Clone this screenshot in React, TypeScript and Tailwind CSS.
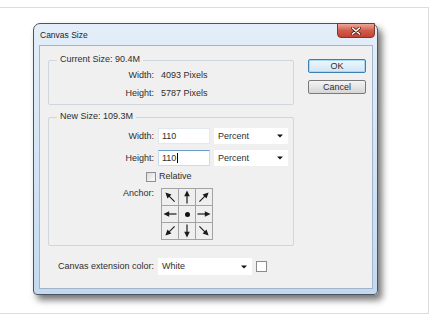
import React from "react";

const font = { fontFamily: '"Liberation Sans", Arial, sans-serif' };

function Arrow({ rot }: { rot: number }) {
  return (
    <svg width="16" height="16" viewBox="0 0 16 16">
      <g transform={`rotate(${rot} 8 8)`}>
        <line x1="8" y1="14.5" x2="8" y2="6" stroke="#1a1a1a" strokeWidth="1.2" />
        <polygon points="8,1.5 5.2,7.2 10.8,7.2" fill="#1a1a1a" />
      </g>
    </svg>
  );
}

function Caret() {
  return (
    <svg width="6" height="4" viewBox="0 0 6 4">
      <polygon points="0,0.5 6,0.5 3,3.5" fill="#111" />
    </svg>
  );
}

function Cell({ children }: { children?: React.ReactNode }) {
  return <div className="bg-[#efefef] flex items-center justify-center">{children}</div>;
}

export default function App() {
  return (
    <div className="w-[433px] h-[328px] bg-white overflow-hidden text-[#2e2e2e] text-[9px]" style={font}>
      <div className="w-[429px] h-[307px] mt-[7px] border-t border-r border-b border-[#dcdcdc] pt-[15px] pl-[33px]">
        <div className="w-[345px] h-[272px] rounded-t-[7px] rounded-b-[4px] border border-[#4b5560] bg-gradient-to-b from-[#e3eef9] to-[#c4d9f0] shadow-[4px_5px_7px_rgba(0,0,0,0.55)] flex flex-col">
          {/* title bar */}
          <div className="h-[21px] flex items-start justify-between">
            <span className="pl-[6px] pt-[6px] text-[8.5px] leading-[10px] text-[#1e1e1e]">Canvas Size</span>
            <div className="-mt-px mr-[2px] w-[38px] h-[15px] rounded-b-[4px] border border-[#83342a] bg-gradient-to-b from-[#eaa89a] via-[#d25c4b] to-[#c4412f] flex items-center justify-center">
              <svg width="10" height="8" viewBox="0 0 10 8">
                <path d="M1.5 1 L8.5 7 M8.5 1 L1.5 7" stroke="#5a1a12" strokeWidth="3" strokeLinecap="round" />
                <path d="M1.5 1 L8.5 7 M8.5 1 L1.5 7" stroke="#ffffff" strokeWidth="1.6" strokeLinecap="round" />
              </svg>
            </div>
          </div>
          {/* client */}
          <div className="ml-[5px] mr-[4px] h-[244px] border border-[#9fb5cc] bg-[#f0f0f0] flex pt-[14px] pl-[8px]">
            <div className="w-[246px] flex flex-col">
              {/* Current size */}
              <div className="relative w-[246px] h-[45px] border border-[#d0d6db] rounded-[2px] pt-[9px]">
                <span className="absolute -top-[7px] left-[8px] px-[3px] bg-[#f0f0f0] leading-[11px]">Current Size: 90.4M</span>
                <div className="flex leading-[11px]">
                  <span className="w-[105px] text-right">Width:</span>
                  <span className="ml-[7px]">4093 Pixels</span>
                </div>
                <div className="flex leading-[11px] mt-[7px]">
                  <span className="w-[105px] text-right">Height:</span>
                  <span className="ml-[7px]">5787 Pixels</span>
                </div>
              </div>
              {/* New size */}
              <div className="relative mt-[12px] w-[246px] h-[129px] border border-[#d0d6db] rounded-[2px] pt-[10px]">
                <span className="absolute -top-[7px] left-[8px] px-[3px] bg-[#f0f0f0] leading-[11px]">New Size: 109.3M</span>
                <div className="flex items-center h-[16px] leading-[11px]">
                  <span className="w-[105px] text-right">Width:</span>
                  <div className="ml-[4px] w-[52px] h-[16px] bg-white border border-[#e3e8ed] pl-[3px] flex items-center">110</div>
                  <div className="ml-[4px] w-[74px] h-[16px] bg-white flex items-center justify-between pl-[4px] pr-[5px]">
                    <span>Percent</span>
                    <Caret />
                  </div>
                </div>
                <div className="flex items-center h-[16px] mt-[6px] leading-[11px]">
                  <span className="w-[105px] text-right">Height:</span>
                  <div className="ml-[4px] w-[52px] h-[16px] bg-white border border-[#c7dcef] border-t-[#6b9dcc] pl-[3px] flex items-center">
                    110<span className="inline-block w-px h-[10px] bg-black ml-px" />
                  </div>
                  <div className="ml-[4px] w-[74px] h-[16px] bg-white flex items-center justify-between pl-[4px] pr-[5px]">
                    <span>Percent</span>
                    <Caret />
                  </div>
                </div>
                <div className="flex items-center h-[13px] mt-[4px] leading-[11px]">
                  <div className="ml-[97px] w-[10px] h-[10px] border border-[#8e8f8f] bg-gradient-to-br from-[#dcdcdc] to-[#fbfbfb]" />
                  <span className="ml-[3px]">Relative</span>
                </div>
                <div className="flex items-start mt-[5px] leading-[11px]">
                  <span className="w-[105px] text-right">Anchor:</span>
                  <div className="ml-[7px] grid grid-cols-[16px_16px_16px] grid-rows-[16px_16px_16px] gap-px bg-[#a3a3a3] border border-[#a3a3a3]">
                    <Cell><Arrow rot={-45} /></Cell>
                    <Cell><Arrow rot={0} /></Cell>
                    <Cell><Arrow rot={45} /></Cell>
                    <Cell><Arrow rot={-90} /></Cell>
                    <Cell>
                      <div className="w-[5px] h-[5px] rounded-full bg-[#111]" />
                    </Cell>
                    <Cell><Arrow rot={90} /></Cell>
                    <Cell><Arrow rot={-135} /></Cell>
                    <Cell><Arrow rot={180} /></Cell>
                    <Cell><Arrow rot={135} /></Cell>
                  </div>
                </div>
              </div>
              {/* extension colour */}
              <div className="flex items-center h-[17px] mt-[12px] leading-[11px]">
                <span className="w-[106px] text-right">Canvas extension color:</span>
                <div className="ml-[4px] w-[94px] h-[17px] bg-white flex items-center justify-between pl-[4px] pr-[5px]">
                  <span>White</span>
                  <Caret />
                </div>
                <div className="ml-[4px] w-[11px] h-[11px] border border-[#8a8a8a] bg-white" />
              </div>
            </div>
            {/* buttons */}
            <div className="ml-[14px] -mt-px flex flex-col">
              <div className="w-[58px] h-[14px] rounded-[2px] border border-[#3c7fb1] bg-gradient-to-b from-[#eef7fd] to-[#cfe6f5] shadow-[inset_0_0_0_1px_#a8d8f5] flex items-center justify-center leading-[11px]">OK</div>
              <div className="mt-[7px] w-[58px] h-[14px] rounded-[2px] border border-[#7a7a7a] bg-gradient-to-b from-[#f4f4f4] to-[#d6d6d6] flex items-center justify-center leading-[11px]">Cancel</div>
            </div>
          </div>
        </div>
      </div>
    </div>
  );
}
